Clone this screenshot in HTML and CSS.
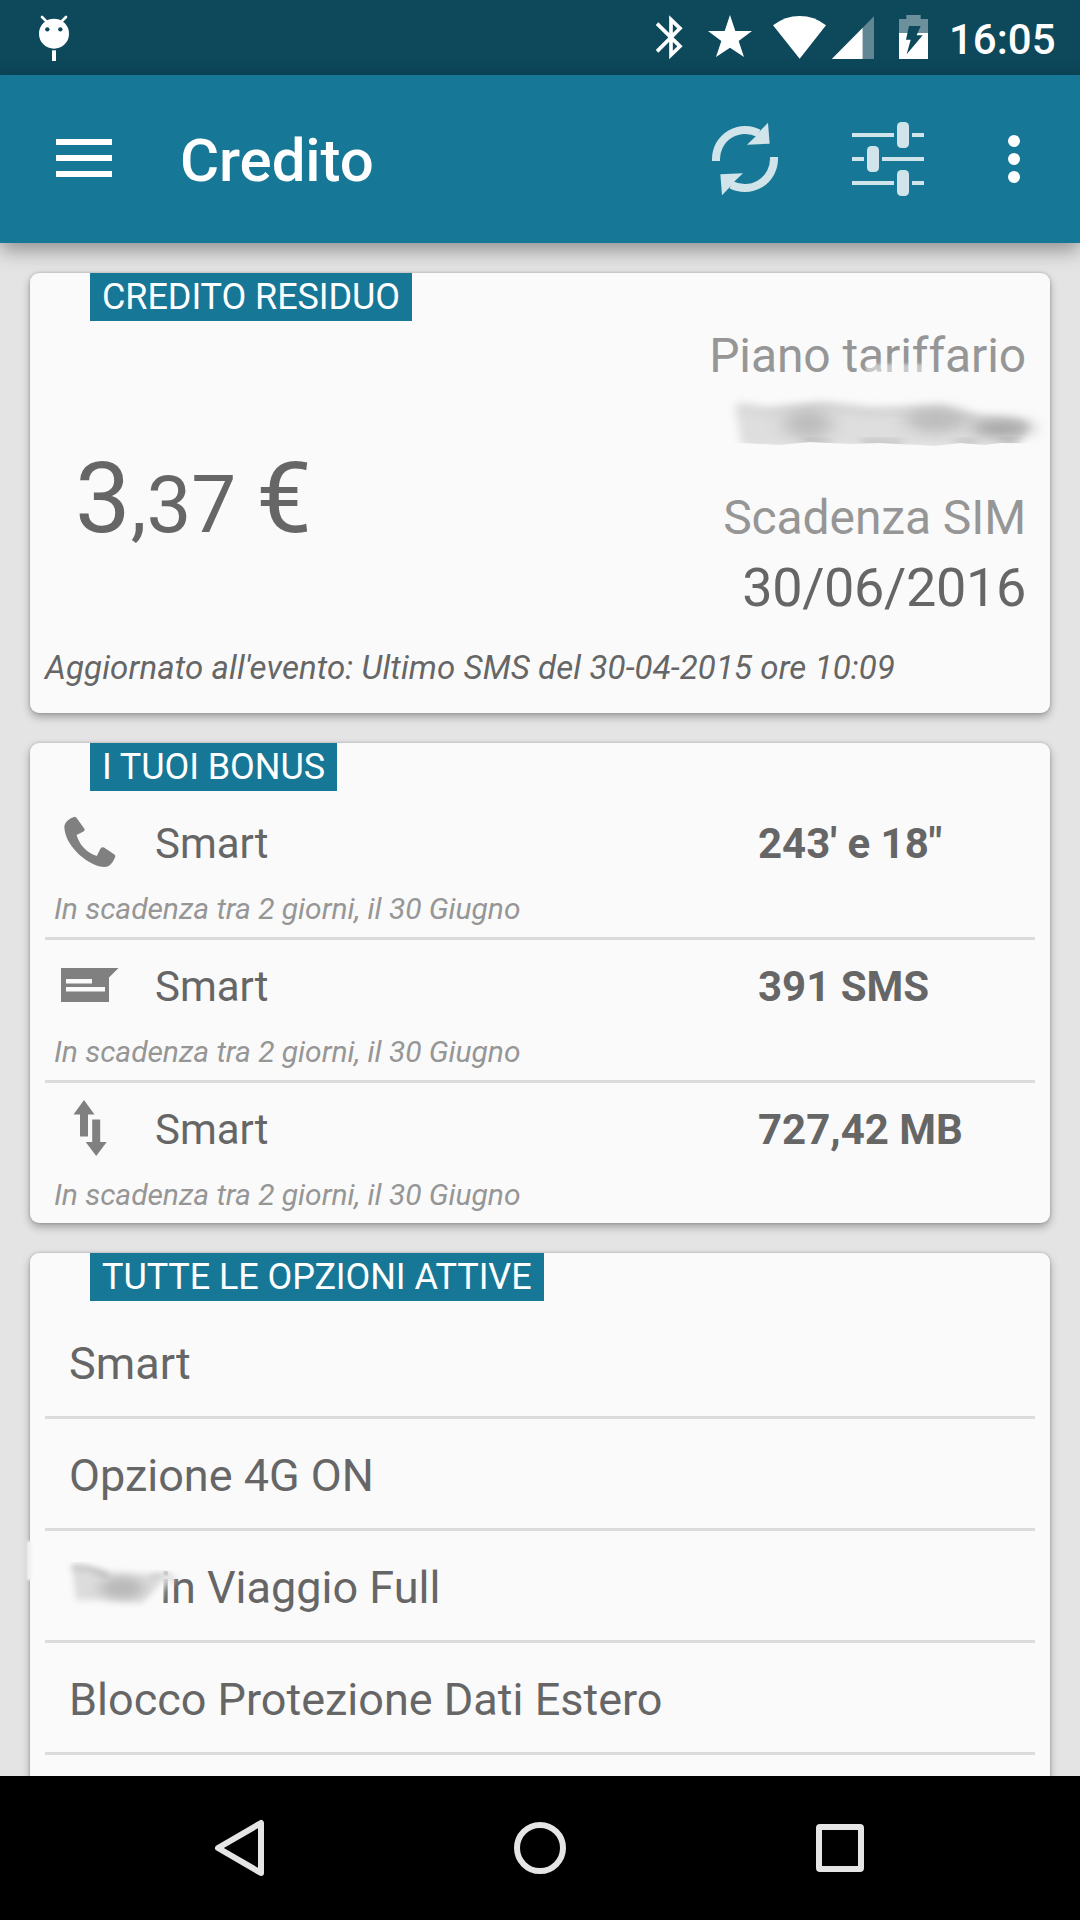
FILE: index.html
```html
<!DOCTYPE html>
<html lang="it">
<head>
  <meta charset="UTF-8" />
  <meta name="viewport" content="width=device-width, initial-scale=1.0"/>
  <title>Credito</title>
  <link rel="stylesheet" href="styles.css">
</head>
<body>

  <div class="status-bar">
    <svg class="ic-debug" width="32" height="48" viewBox="114 42 96 144" fill="#fff">
      <circle cx="162" cy="101" r="45"/>
      <path d="M126 51l14 14M198 51l-14 14" stroke="#fff" stroke-width="8" stroke-linecap="round"/>
      <circle cx="142" cy="88" r="6.5" fill="#0d485b"/>
      <circle cx="181" cy="88" r="6.5" fill="#0d485b"/>
      <rect x="156" y="151" width="12" height="32"/>
    </svg>
    <svg class="ic-bluetooth" width="27" height="45" viewBox="48 45 81 135" fill="none" stroke="#fff" stroke-width="11">
      <path d="M51 71L120 139L93 165V59L120 85L51 154"/>
    </svg>
    <svg class="ic-star" width="44" height="45" viewBox="204 45 132 135" fill="#fff">
      <path d="M270 45L286 93L336 93L296 123L312 171L270 143L228 171L244 123L204 93L254 93Z"/>
    </svg>
    <svg class="ic-wifi" width="53" height="45" viewBox="399 45 159 135" fill="#fff">
      <path d="M399 76Q435 48 479 48T558 76L479 176Z"/>
    </svg>
    <svg class="ic-signal" width="42" height="45" viewBox="576 45 126 135" fill="#fff">
      <path d="M702 49V177H668V83Z" opacity=".35"/>
      <path d="M575 177L668 83V177Z"/>
    </svg>
    <svg class="ic-battery" width="29" height="45" viewBox="777 45 87 135" fill="#fff">
      <path d="M799 45H842V57H864V99H777V57H799Z" opacity=".4"/>
      <path d="M777 99H864V177H777Z"/>
      <path d="M807 78H842L830 106H848L800 163L812 119H798Z" fill="#0d485b"/>
    </svg>
    <span class="clock">16:05</span>
  </div>

  <header class="app-bar">
    <svg width="56" height="78" viewBox="168 360 168 234" fill="#fff">
      <path d="M168 417h168v18H168zM168 465h168v18H168zM168 513h168v18H168z"/>
    </svg>
    <h1>Credito</h1>
    <svg class="ic-refresh" width="70" height="78" viewBox="90 60 210 234" fill="#d1e4ea">
      <path d="M108 183V177A87 87 0 0 1 236 100" fill="none" stroke="#d1e4ea" stroke-width="24"/>
      <path d="M264 68L269 131L201 134L226 110L241 92Z"/>
      <path d="M282 171V177A87 87 0 0 1 154 254" fill="none" stroke="#d1e4ea" stroke-width="24"/>
      <path d="M126 286L121 223L189 220L164 244L149 262Z"/>
    </svg>
    <svg class="ic-tune" width="76" height="78" viewBox="510 60 228 234" fill="#d1e4ea">
      <path d="M516 99h126v12H516zM696 99h36v12h-36zM516 171h36v12h-36zM606 171h126v12H606zM516 243h126v12H516zM696 243h36v12h-36z"/>
      <rect x="651" y="66" width="36" height="78" rx="13"/>
      <rect x="561" y="138" width="36" height="78" rx="13"/>
      <rect x="651" y="210" width="36" height="78" rx="13"/>
    </svg>
    <svg class="ic-more" width="12" height="78" viewBox="984 60 36 234" fill="#fff">
      <circle cx="1002" cy="123" r="18"/>
      <circle cx="1002" cy="177" r="18"/>
      <circle cx="1002" cy="231" r="18"/>
    </svg>
  </header>

  <main class="content">

    <section class="card credit">
      <h2 class="label">CREDITO RESIDUO</h2>
      <div class="credit-body">
        <div class="amount">3<span class="cents">,37 </span>€</div>
        <div class="sim">
          <div class="sim-label">Piano tariffario</div>
          <div class="plan">
            <!-- nome del piano nascosto -->
            <svg class="smudge-plan" width="360" height="110" viewBox="690 355 360 110">
              <defs>
                <filter id="b1" x="-20%" y="-80%" width="140%" height="260%"><feGaussianBlur stdDeviation="1.5"/></filter>
                <filter id="b3" x="-20%" y="-60%" width="140%" height="220%"><feGaussianBlur stdDeviation="4"/></filter>
                <filter id="b6" x="-60%" y="-80%" width="220%" height="260%"><feGaussianBlur stdDeviation="9 6"/></filter>
                <clipPath id="cp"><path d="M690 390H1050V444L1000 443L985 445L960 443L935 446L880 443L850 444L810 442L780 445L740 443L690 444Z"/></clipPath>
              </defs>
              <path d="M866 364H932V374H866Z" fill="#fafafa" opacity=".5" filter="url(#b1)"/>
              <g clip-path="url(#cp)">
                <path d="M735 406L765 410L822 403L870 409L940 407L985 417L1030 423L1016 448L742 448Z" fill="#dedede" filter="url(#b3)"/>
                <ellipse cx="808" cy="424" rx="24" ry="15" fill="#b4b4b4" opacity=".75" filter="url(#b6)"/>
                <ellipse cx="936" cy="420" rx="30" ry="13" fill="#b4b4b4" opacity=".75" filter="url(#b6)"/>
                <ellipse cx="1002" cy="428" rx="30" ry="9" fill="#989898" opacity=".8" filter="url(#b6)"/>
                <path d="M738 406L768 411L825 406L870 411L940 411L985 420L1022 425" fill="none" stroke="#b8b8b8" stroke-width="6" opacity=".5" filter="url(#b3)"/>
                <path d="M804 441l26 4M862 442l40 2M955 443l22 1M1000 441l18-1" fill="none" stroke="#999" stroke-width="5" opacity=".6" filter="url(#b3)"/>
              </g>
            </svg>
          </div>
          <div class="sim-label">Scadenza SIM</div>
          <div class="sim-date">30/06/2016</div>
        </div>
      </div>
      <p class="updated">Aggiornato all'evento: Ultimo SMS del 30-04-2015 ore 10:09</p>
    </section>

    <section class="card bonus">
      <h2 class="label">I TUOI BONUS</h2>
      <ul class="bonus-list">
        <li>
          <div class="bonus-main">
            <svg width="60" height="60" viewBox="60 812 60 60" fill="#808080">
              <path d="M74.6 816.7Q76 817 77 818.5L84.6 829Q85 830.5 83.5 831.5L76.6 835C79 844 86 852.5 96.8 856L100.5 848.5Q102 846.5 104 847.5L114.5 854.5Q116 856 115 857.5Q111 867 104.6 867C91 867 65 848 64.3 826.7Q65 820 74.6 816.7Z"/>
            </svg>
            <span class="name">Smart</span>
            <span class="value">243' e 18"</span>
          </div>
          <p class="note">In scadenza tra 2 giorni, il 30 Giugno</p>
        </li>
        <li>
          <div class="bonus-main">
            <svg width="60" height="60" viewBox="60 955 60 60">
              <path d="M61 968H118.5L109 977.5V1002H61Z" fill="#808080"/>
              <path d="M66 979H92V983.5H66ZM66 987H105V991.5H66Z" fill="#fafafa"/>
            </svg>
            <span class="name">Smart</span>
            <span class="value">391 SMS</span>
          </div>
          <p class="note">In scadenza tra 2 giorni, il 30 Giugno</p>
        </li>
        <li>
          <div class="bonus-main">
            <svg width="60" height="60" viewBox="60 1098 60 60" fill="#808080">
              <path d="M84 1100L94.5 1114.5H88V1136.5H80V1114.5H73.5Z"/>
              <path d="M96.2 1156L106.7 1142H100.2V1119.5H92.2V1142H85.7Z"/>
            </svg>
            <span class="name">Smart</span>
            <span class="value">727,42 MB</span>
          </div>
          <p class="note">In scadenza tra 2 giorni, il 30 Giugno</p>
        </li>
      </ul>
    </section>

    <section class="card options">
      <h2 class="label">TUTTE LE OPZIONI ATTIVE</h2>
      <ul class="option-list">
        <li>Smart</li>
        <li>Opzione 4G ON</li>
        <li class="masked">
          in Viaggio Full
          <svg class="smudge-option" width="160" height="90" viewBox="20 1530 160 90">
            <defs>
              <filter id="s1" x="-80%" y="-60%" width="260%" height="220%"><feGaussianBlur stdDeviation="1.2"/></filter>
              <filter id="s3" x="-30%" y="-60%" width="160%" height="220%"><feGaussianBlur stdDeviation="3"/></filter>
              <filter id="s5" x="-60%" y="-80%" width="220%" height="260%"><feGaussianBlur stdDeviation="7 5"/></filter>
            </defs>
            <path d="M27 1541H32V1580H27Z" fill="#f2f2f2" filter="url(#s1)"/>
            <path d="M156 1566H170L172 1580L164 1590L160 1604H156Z" fill="#fafafa" opacity=".75" filter="url(#s3)"/>
            <path d="M72 1567L105 1572L165 1575L160 1584L142 1603L100 1600L76 1600Z" fill="#dcdcdc" filter="url(#s3)"/>
            <ellipse cx="122" cy="1588" rx="22" ry="11" fill="#aeaeae" opacity=".75" filter="url(#s5)"/>
            <path d="M72 1567L88 1568L108 1575" fill="none" stroke="#999" stroke-width="4" opacity=".7" filter="url(#s3)"/>
            <path d="M150 1576L168 1575L176 1582" fill="none" stroke="#bbb" stroke-width="4" opacity=".7" filter="url(#s3)"/>
          </svg>
        </li>
        <li>Blocco Protezione Dati Estero</li>
      </ul>
    </section>

  </main>

  <nav class="nav-bar">
    <svg width="60" height="60" viewBox="210 1818 60 60">
      <path d="M261 1823V1873L218 1848Z"/>
    </svg>
    <svg width="60" height="60" viewBox="510 1818 60 60">
      <circle cx="540" cy="1848" r="23"/>
    </svg>
    <svg width="60" height="60" viewBox="810 1818 60 60">
      <rect x="819" y="1827" width="42" height="42" rx="1"/>
    </svg>
  </nav>

</body>
</html>
```
FILE: styles.css
```css
* {
  box-sizing: border-box;
  margin: 0;
  padding: 0;
}

body {
  width: 1080px;
  height: 1920px;
  overflow: hidden;
  display: flex;
  flex-direction: column;
  font-family: Roboto, sans-serif;
  color: #666;
  background-color: #e4e4e4;
}

svg {
  display: block;
  flex: none;
}

ul {
  list-style: none;
}

/* Barra di stato */
.status-bar {
  flex: none;
  height: 75px;
  display: flex;
  align-items: center;
  padding-left: 38px;
  background-color: #0d485b;
}

.ic-bluetooth {
  margin-left: 586px;
}

.ic-star {
  margin-left: 25px;
}

.ic-wifi {
  margin-left: 21px;
}

.ic-signal {
  margin-left: 6px;
}

.ic-battery {
  margin-left: 25px;
}

.clock {
  margin-left: 21px;
  padding-top: 4px;
  font-size: 42px;
  font-weight: 500;
  color: #fff;
}

/* Barra dell'app */
.app-bar {
  flex: none;
  height: 168px;
  display: flex;
  align-items: center;
  padding-left: 56px;
  background-color: #177796;
  box-shadow: 0 6px 20px rgba(0, 0, 0, 0.4);
  z-index: 1;
}

.app-bar h1 {
  width: 530px;
  margin-left: 68px;
  padding-top: 3px;
  font-size: 60px;
  font-weight: 500;
  letter-spacing: -0.1px;
  color: #fff;
}

.ic-tune {
  margin-left: 70px;
}

.ic-more {
  margin-left: 82px;
}

/* Schede */
.content {
  flex: 1;
  min-height: 0;
  overflow: hidden;
  display: flex;
  flex-direction: column;
  gap: 30px;
  padding: 30px 30px 0;
}

.card {
  flex: none;
  border-radius: 9px;
  background-color: #fafafa;
  box-shadow: 0 4px 8px rgba(0, 0, 0, 0.3), 0 0 3px rgba(0, 0, 0, 0.2);
}

.label {
  width: max-content;
  height: 48px;
  margin-left: 60px;
  padding: 0 12px;
  font-size: 36px;
  font-weight: 400;
  line-height: 48px;
  letter-spacing: -0.08px;
  white-space: nowrap;
  color: #fff;
  background-color: #177796;
}

/* Credito */
.credit {
  height: 440px;
}

.credit-body {
  height: 326px;
  display: flex;
  justify-content: space-between;
  padding: 7px 24px 0 45px;
}

.amount {
  padding-top: 110px;
  font-size: 99px;
  line-height: 120px;
}

.cents {
  font-size: 80px;
}

.sim {
  text-align: right;
}

.sim-label {
  font-size: 48px;
  line-height: 56px;
  letter-spacing: -0.1px;
  color: #969696;
}

.plan {
  position: relative;
  height: 106px;
}

.smudge-plan {
  position: absolute;
  top: -29px;
  right: -24px;
}

.sim-date {
  margin-top: 10px;
  font-size: 54px;
  line-height: 64px;
  letter-spacing: -0.35px;
}

.updated {
  padding-left: 15px;
  font-size: 33px;
  font-style: italic;
  line-height: 42px;
  letter-spacing: 0.11px;
}

/* Bonus */
.bonus {
  height: 480px;
}

.bonus-list {
  padding: 6px 15px 0;
}

.bonus-list li {
  height: 143px;
  border-bottom: 3px solid #dbdbdb;
}

.bonus-list li:last-child {
  border-bottom: none;
}

.bonus-main {
  display: flex;
  height: 93px;
  padding-left: 15px;
  font-size: 42px;
  line-height: 93px;
}

.bonus-main svg {
  margin-top: 15px;
}

.name {
  width: 603px;
  margin-left: 35px;
}

.value {
  font-weight: 700;
}

.note {
  padding-left: 9px;
  font-size: 30px;
  font-style: italic;
  line-height: 37px;
  letter-spacing: -0.05px;
  color: #969696;
}

/* Opzioni attive */
.options {
  height: 560px;
}

.option-list {
  padding: 6px 15px 0;
}

.option-list li {
  height: 112px;
  padding: 4px 0 0 24px;
  border-bottom: 3px solid #dbdbdb;
  font-size: 45px;
  line-height: 105px;
}

.option-list .masked {
  position: relative;
  padding-left: 115px;
}

.smudge-option {
  position: absolute;
  left: -25px;
  top: -1px;
}

/* Barra di navigazione */
.nav-bar {
  flex: none;
  height: 144px;
  display: flex;
  justify-content: center;
  align-items: center;
  gap: 240px;
  background-color: #000;
  z-index: 1;
}

.nav-bar svg {
  fill: none;
  stroke: #e5e5e5;
  stroke-width: 6;
  stroke-linejoin: round;
}
```
